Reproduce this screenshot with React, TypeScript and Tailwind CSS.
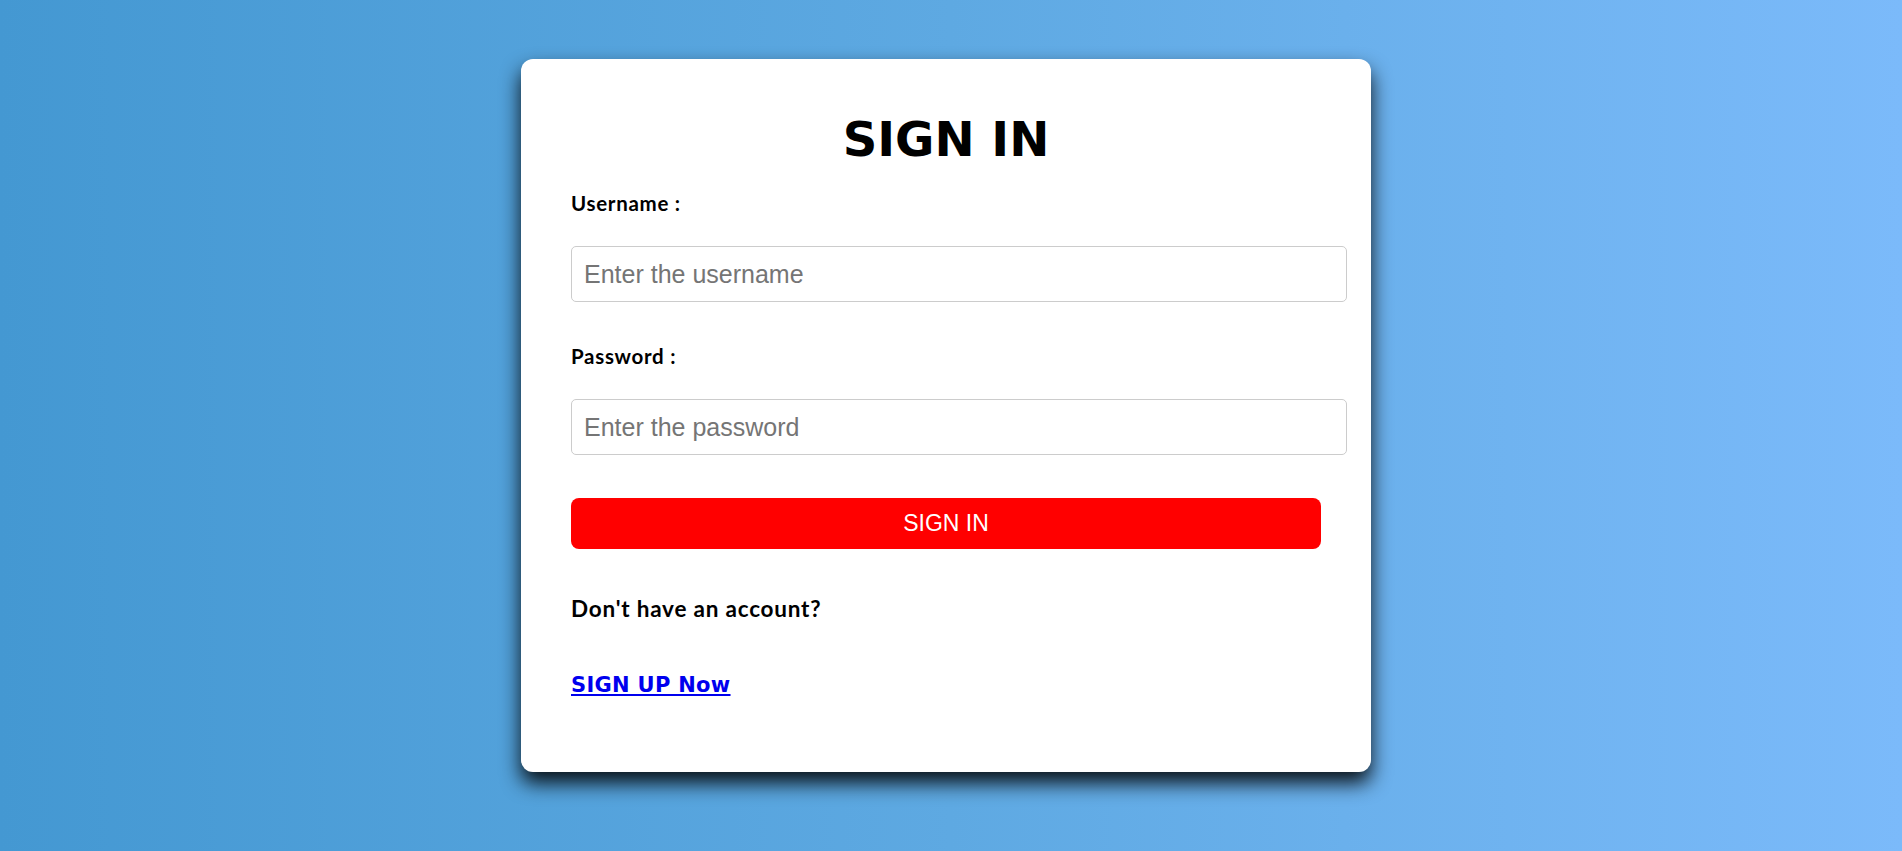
export default function App() {
  return (
    <div className="min-h-screen w-full bg-[linear-gradient(to_right,#4498d2,#5ea9e2_50%,#7bbafa)] pt-[59px] pb-[80px]">
      <div className="flex justify-center pr-[10px]">
        <div className="w-[850px] rounded-[12px] bg-white px-[50px] pt-[56px] pb-[74px] shadow-[0_11px_20px_rgba(0,0,0,0.9)]">
          <h1 className="text-center font-['DejaVu_Sans',sans-serif] text-[48px] font-bold leading-[48px] text-black">
            SIGN IN
          </h1>

          <form onSubmit={(e) => e.preventDefault()}>
            <label
              htmlFor="username"
              className="mt-[28px] block font-['Lato',sans-serif] text-[20.5px] font-bold leading-[24px] tracking-[0.7px] text-black"
            >
              Username :
            </label>
            <input
              id="username"
              type="text"
              placeholder="Enter the username"
              className="mt-[31px] box-content block h-[54px] w-full rounded-[5px] border border-[#cccccc] px-[12px] py-0 font-['Liberation_Sans',Arial,sans-serif] text-[25px] text-black outline-none placeholder:text-[#757575]"
            />

            <label
              htmlFor="password"
              className="mt-[42px] block font-['Lato',sans-serif] text-[20.5px] font-bold leading-[24px] tracking-[0.7px] text-black"
            >
              Password :
            </label>
            <input
              id="password"
              type="password"
              placeholder="Enter the password"
              className="mt-[31px] box-content block h-[54px] w-full rounded-[5px] border border-[#cccccc] px-[12px] py-0 font-['Liberation_Sans',Arial,sans-serif] text-[25px] text-black outline-none placeholder:text-[#757575]"
            />

            <button
              type="submit"
              className="mt-[43px] block h-[51px] w-full rounded-[8px] bg-[#ff0000] font-['Liberation_Sans',Arial,sans-serif] text-[23px] text-white"
            >
              SIGN IN
            </button>
          </form>

          <p className="mt-[47px] font-['Lato',sans-serif] text-[22.5px] font-bold leading-[26px] tracking-[0.8px] text-black">
            Don't have an account?
          </p>
          <p className="mt-[51px] leading-[24px]">
            <a
              href="#"
              className="font-['DejaVu_Sans',sans-serif] text-[21px] font-bold tracking-[0.3px] text-[#0000ee] underline"
            >
              SIGN UP Now
            </a>
          </p>
        </div>
      </div>
    </div>
  );
}
